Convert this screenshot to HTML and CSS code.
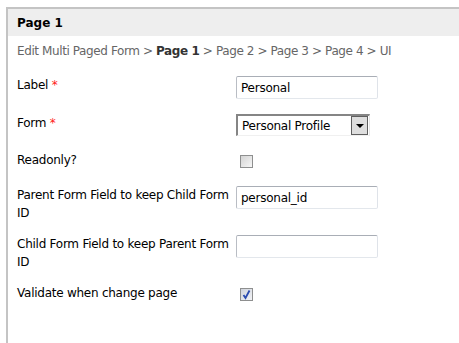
FILE: index.html
```html
<!DOCTYPE html>
<html lang="en">
  <head>
    <meta charset="UTF-8" />
    <title>Page 1</title>
    <link rel="stylesheet" href="styles.css">
  </head>
  <body>
    <div class="panel">
      <div class="panel-head">Page 1</div>

      <div class="panel-body">
        <div class="crumbs">
          Edit Multi Paged Form &gt; <b>Page 1</b> &gt; Page 2 &gt; Page 3 &gt; Page 4 &gt; UI
        </div>

        <div class="form">
          <div class="row">
            <label>Label <span class="req">*</span></label>
            <div class="field"><div class="textbox">Personal</div></div>
          </div>

          <div class="row">
            <label>Form <span class="req">*</span></label>
            <div class="field">
              <div class="select">
                <span class="select-text">Personal Profile</span>
                <span class="select-btn"><i class="arrow"></i></span>
              </div>
            </div>
          </div>

          <div class="row">
            <label>Readonly?</label>
            <div class="field"><span class="check"></span></div>
          </div>

          <div class="row">
            <label>Parent Form Field to keep Child Form ID</label>
            <div class="field"><div class="textbox">personal_id</div></div>
          </div>

          <div class="row">
            <label>Child Form Field to keep Parent Form ID</label>
            <div class="field"><div class="textbox"></div></div>
          </div>

          <div class="row">
            <label>Validate when change page</label>
            <div class="field">
              <span class="check checked">
                <svg width="11" height="11" viewBox="0 0 11 11">
                  <path d="M2.5 6 L4.5 9 L8.5 1.5" fill="none" stroke="#2a4bb0" stroke-width="1.8" />
                </svg>
              </span>
            </div>
          </div>
        </div>
      </div>
    </div>
  </body>
</html>
```

FILE: styles.css
```css
html,
body {
  margin: 0;
  padding: 0;
  background-color: #ffffff;
  overflow: hidden;
}

body {
  font-family: "DejaVu Sans", Verdana, sans-serif;
  font-size: 12px;
  letter-spacing: -0.25px;
  line-height: 18px;
  color: #000;
}

.panel {
  margin: 7px -20px 0 6px;
  height: 400px;
  border-top: 2px solid #c4c4c4;
  border-left: 2px solid #c4c4c4;
}

.panel-head {
  background-color: #eeeeee;
  height: 27px;
  line-height: 28px;
  padding-left: 9px;
  font-size: 12px;
  font-weight: bold;
  letter-spacing: 0;
}

.panel-body {
  padding: 6px 0 0 9px;
}

.crumbs {
  color: #666666;
  font-size: 12px;
  letter-spacing: -0.4px;
}

.crumbs b {
  color: #333333;
}

.form {
  margin-top: 16px;
}

.row {
  display: grid;
  grid-template-columns: 219px 1fr;
  margin-bottom: 13px;
}

.row label {
  display: block;
  padding-right: 2px;
}

.field {
  padding-bottom: 2px;
}

.req {
  color: #ff2020;
}

.textbox {
  box-sizing: border-box;
  width: 142px;
  height: 23px;
  padding: 2px 4px;
  border: 1px solid;
  border-color: #a9aeb6 #dfe3e9 #e3e7ec #b9bdc4;
  border-radius: 2px;
  background-color: #ffffff;
}

.select {
  box-sizing: border-box;
  display: flex;
  align-items: center;
  width: 134px;
  height: 22px;
  border-top: 2px solid #858585;
  border-left: 2px solid #858585;
  border-right: 1px solid #e6e6e6;
  border-bottom: 1px solid #f0f0f0;
}

.select-text {
  flex: 1;
  padding-left: 4px;
}

.select-btn {
  box-sizing: border-box;
  display: flex;
  align-items: center;
  justify-content: center;
  width: 17px;
  height: 19px;
  margin-right: 1px;
  border: 1px solid #5f5f5f;
  background-color: #dedede;
}

.arrow {
  width: 0;
  height: 0;
  border-left: 4px solid transparent;
  border-right: 4px solid transparent;
  border-top: 4px solid #000000;
}

.check {
  box-sizing: border-box;
  display: flex;
  align-items: center;
  justify-content: center;
  width: 13px;
  height: 13px;
  margin: 4px 0 3px 4px;
  border: 1px solid #8e8f8f;
  background: linear-gradient(135deg, #d4d4d4, #f6f6f6);
}

.check.checked {
  background: linear-gradient(135deg, #cfd3dc, #f2f3f6);
}
```
